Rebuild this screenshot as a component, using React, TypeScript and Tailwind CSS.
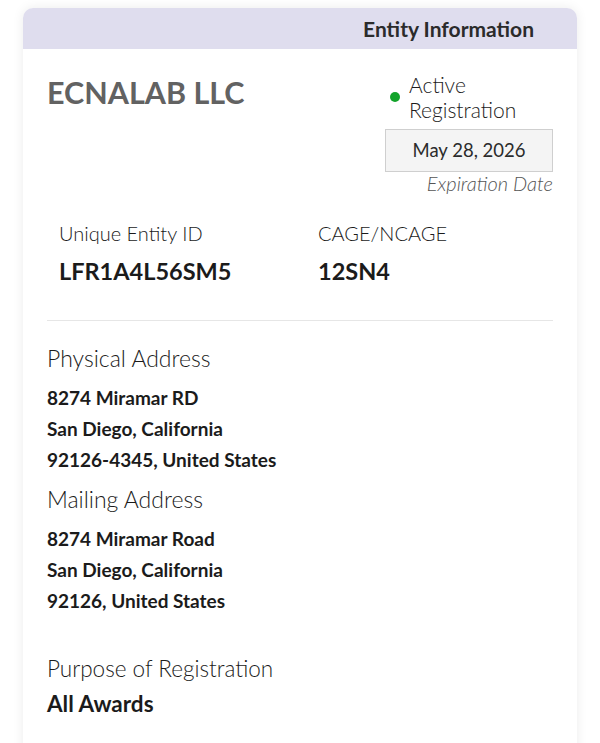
import { ReactNode } from 'react'

const font = { fontFamily: 'Lato, "Noto Sans", sans-serif' }

function AddressBlock({ title, lines }: { title: string; lines: string[] }) {
  return (
    <div>
      <h3 className="text-[23px] font-light leading-[28px] text-[#1b1b1b]">{title}</h3>
      <div className="mt-[10px]">
        {lines.map((line) => (
          <p key={line} className="text-[19px] font-bold leading-[31px] text-[#1b1b1b]">
            {line}
          </p>
        ))}
      </div>
    </div>
  )
}

function IdField({ label, children }: { label: string; children: ReactNode }) {
  return (
    <div>
      <p className="text-[20px] font-light leading-[26px] text-[#1b1b1b]">{label}</p>
      <p className="mt-[11px] text-[23.5px] font-bold leading-[28px] text-[#1b1b1b]">{children}</p>
    </div>
  )
}

export default function App() {
  return (
    <div className="min-h-screen bg-white px-[23px] pt-[8px]" style={font}>
      <div className="rounded-t-[10px] bg-white shadow-[0_0_12px_rgba(0,0,0,0.08)]">
        {/* Header */}
        <div className="flex h-[41px] items-center justify-end rounded-t-[10px] bg-[#dfddee] pr-[43px]">
          <h2 className="text-[21px] font-bold text-[#2b2b2b]">Entity Information</h2>
        </div>

        <div className="px-[24px] pb-[40px]">
          {/* Name + status */}
          <div className="flex justify-between pt-[23px]">
            <h1 className="text-[30.5px] font-bold leading-[40px] text-[#626262]">ECNALAB LLC</h1>
            <div className="flex w-[168px] flex-col">
              <div className="flex items-center pl-[5px]">
                <span className="mr-[9px] h-[10px] w-[10px] rounded-full bg-[#12a32a]" />
                <span className="text-[21px] font-light leading-[25px] text-[#1b1b1b]">
                  Active
                  <br />
                  Registration
                </span>
              </div>
              <div className="mt-[7px] flex h-[43px] items-center justify-center border border-[#cfcfcf] bg-[#f4f4f4]">
                <span className="text-[18.5px] text-[#2b2b2b]">May 28, 2026</span>
              </div>
              <p className="text-right text-[20px] font-light italic leading-[22px] text-[#555]">
                Expiration Date
              </p>
            </div>
          </div>

          {/* IDs */}
          <div className="mt-[26px] grid grid-cols-[259px_1fr] px-[12px]">
            <IdField label="Unique Entity ID">LFR1A4L56SM5</IdField>
            <IdField label="CAGE/NCAGE">12SN4</IdField>
          </div>

          <hr className="mt-[35px] border-t border-[#e6e6e6]" />

          <div className="mt-[23px] flex flex-col gap-[10px]">
            <AddressBlock
              title="Physical Address"
              lines={['8274 Miramar RD', 'San Diego, California', '92126-4345, United States']}
            />
            <AddressBlock
              title="Mailing Address"
              lines={['8274 Miramar Road', 'San Diego, California', '92126, United States']}
            />
          </div>

          <div className="mt-[39px]">
            <h3 className="text-[22.5px] font-light leading-[28px] text-[#1b1b1b]">Purpose of Registration</h3>
            <p className="mt-[7px] text-[22.5px] font-bold leading-[28px] text-[#1b1b1b]">All Awards</p>
          </div>
        </div>
      </div>
    </div>
  )
}
